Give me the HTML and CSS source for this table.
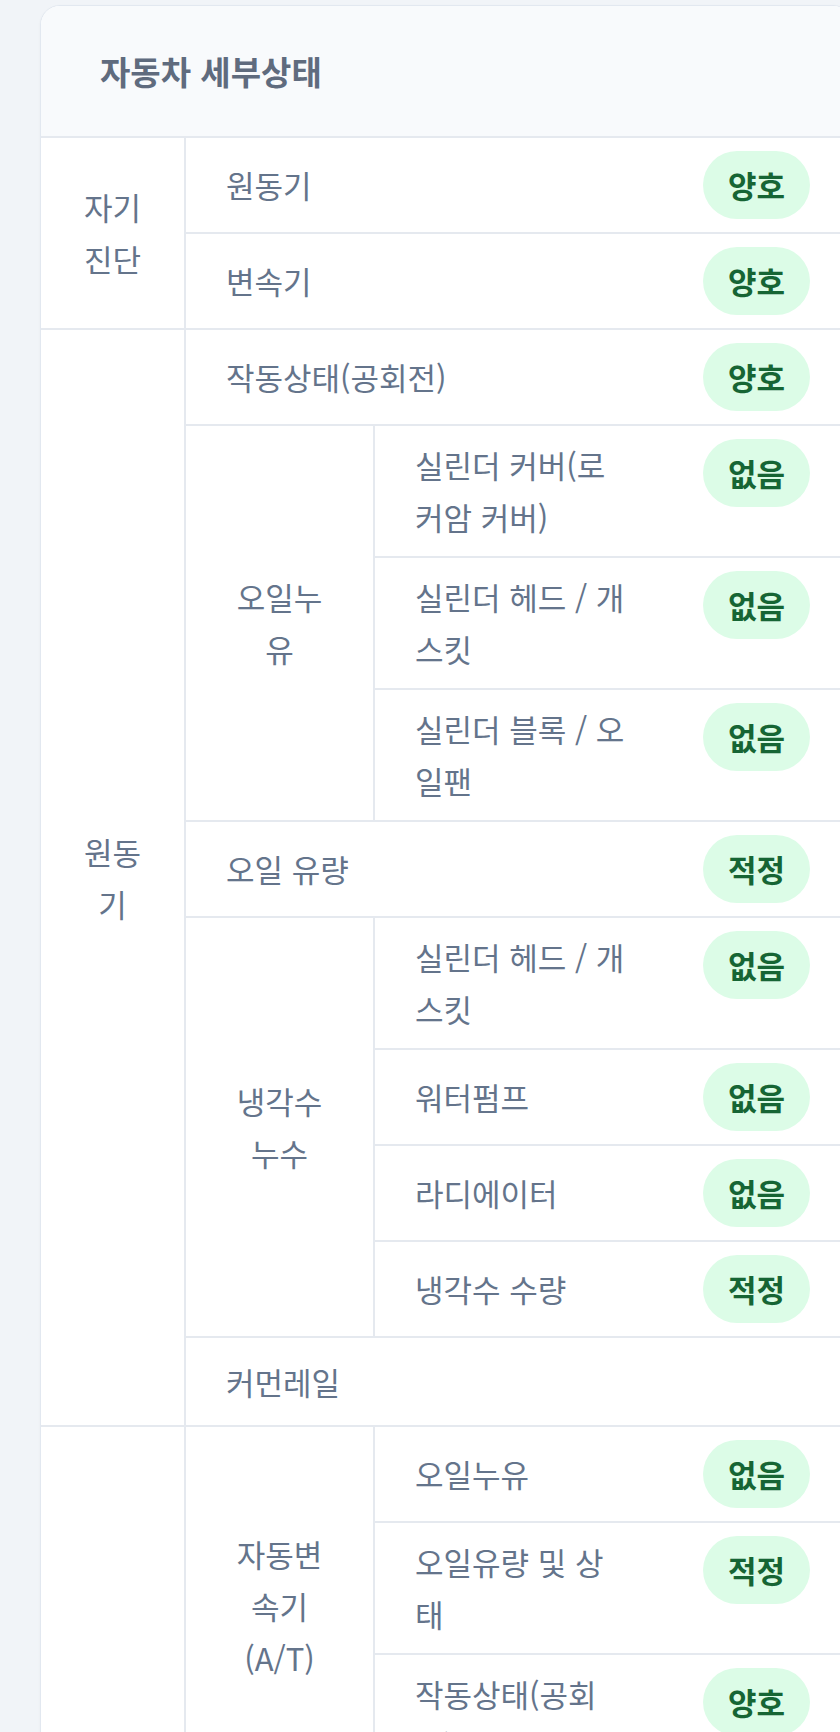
FILE: index.html
```html
<!DOCTYPE html>
<html lang="ko">
<head>
    <meta charset="UTF-8">
    <meta name="viewport" content="width=device-width, initial-scale=1.0">
    <title>자동차 세부상태</title>
    <link rel="stylesheet" href="styles.css">
</head>
<body>
    <div class="card">
        <div class="card-head">
            <h2>자동차 세부상태</h2>
        </div>

        <!-- 자기진단 -->
        <div class="section">
            <div class="cat">자기 진단</div>
            <div class="items">
                <div class="row"><span class="name">원동기</span><span class="value"><span class="badge">양호</span></span></div>
                <div class="row"><span class="name">변속기</span><span class="value"><span class="badge">양호</span></span></div>
            </div>
        </div>

        <!-- 원동기 -->
        <div class="section">
            <div class="cat">원동기</div>
            <div class="items">
                <div class="row"><span class="name">작동상태(공회전)</span><span class="value"><span class="badge">양호</span></span></div>
                <div class="group">
                    <div class="sub">오일누유</div>
                    <div class="items">
                        <div class="row"><span class="name">실린더 커버(로커암 커버)</span><span class="value"><span class="badge">없음</span></span></div>
                        <div class="row"><span class="name">실린더 헤드 / 개스킷</span><span class="value"><span class="badge">없음</span></span></div>
                        <div class="row"><span class="name">실린더 블록 / 오일팬</span><span class="value"><span class="badge">없음</span></span></div>
                    </div>
                </div>
                <div class="row"><span class="name">오일 유량</span><span class="value"><span class="badge">적정</span></span></div>
                <div class="group">
                    <div class="sub">냉각수 누수</div>
                    <div class="items">
                        <div class="row"><span class="name">실린더 헤드 / 개스킷</span><span class="value"><span class="badge">없음</span></span></div>
                        <div class="row"><span class="name">워터펌프</span><span class="value"><span class="badge">없음</span></span></div>
                        <div class="row"><span class="name">라디에이터</span><span class="value"><span class="badge">없음</span></span></div>
                        <div class="row"><span class="name">냉각수 수량</span><span class="value"><span class="badge">적정</span></span></div>
                    </div>
                </div>
                <div class="row"><span class="name">커먼레일</span><span class="value"></span></div>
            </div>
        </div>

        <!-- 변속기 -->
        <div class="section">
            <div class="cat">변속기</div>
            <div class="items">
                <div class="group">
                    <div class="sub">자동변속기(A/T)</div>
                    <div class="items">
                        <div class="row"><span class="name">오일누유</span><span class="value"><span class="badge">없음</span></span></div>
                        <div class="row"><span class="name">오일유량 및 상태</span><span class="value"><span class="badge">적정</span></span></div>
                        <div class="row"><span class="name">작동상태(공회전)</span><span class="value"><span class="badge">양호</span></span></div>
                    </div>
                </div>
                <div class="group">
                    <div class="sub">수동변속기(M/T)</div>
                    <div class="items">
                        <div class="row"><span class="name">오일누유</span><span class="value"></span></div>
                        <div class="row"><span class="name">기어변속장치</span><span class="value"></span></div>
                        <div class="row"><span class="name">오일유량 및 상태</span><span class="value"></span></div>
                        <div class="row"><span class="name">작동상태(공회전)</span><span class="value"></span></div>
                    </div>
                </div>
            </div>
        </div>
    </div>
</body>
</html>
```

FILE: styles.css
```css
/* Base */
* {
    margin: 0;
    padding: 0;
    box-sizing: border-box;
}

body {
    font-family: "Noto Sans CJK KR", "Noto Sans", sans-serif;
    color: #64748b;
    background-color: #f1f4f8;
    padding: 5px 0 40px 40px;
    overflow-x: hidden;
}

/* Card */
.card {
    width: 813px;
    background: #fff;
    border: 1px solid #e2e8f0;
    border-radius: 20px;
    overflow: hidden;
    box-shadow: 0 1px 3px rgba(15, 23, 42, 0.04);
}

.card-head {
    background: #f8fafc;
    padding: 42px 59px 41px;
    border-bottom: 2px solid #e5e9ef;
}

.card-head h2 {
    font-size: 33px;
    font-weight: 700;
    line-height: 47px;
    color: #5f6b7e;
}

/* Table-ish layout */
.section {
    display: flex;
}

.section + .section {
    border-top: 2px solid #e5e9ef;
}

.cat,
.sub {
    flex-shrink: 0;
    display: flex;
    align-items: center;
    justify-content: center;
    text-align: center;
    padding: 0 40px;
    font-size: 31px;
    line-height: 52px;
    border-right: 2px solid #e5e9ef;
}

.cat {
    width: 145px;
}

.sub {
    width: 189px;
}

.items {
    flex: 1;
    display: flex;
    flex-direction: column;
}

.items > * + * {
    border-top: 2px solid #e5e9ef;
}

.group {
    display: flex;
}

.row {
    display: flex;
    align-items: center;
    padding: 13px 0;
}

.name {
    flex: 1;
    padding: 0 37px 0 40px;
    font-size: 31px;
    line-height: 52px;
}

.value {
    width: 189px;
    flex-shrink: 0;
    align-self: flex-start;
    padding: 0 40px;
    min-height: 61px;
}

/* Status badge */
.badge {
    display: inline-block;
    height: 68px;
    padding: 0 25px;
    border-radius: 34px;
    background: #dcfce7;
    color: #166534;
    font-size: 31px;
    font-weight: 700;
    line-height: 68px;
}
```
